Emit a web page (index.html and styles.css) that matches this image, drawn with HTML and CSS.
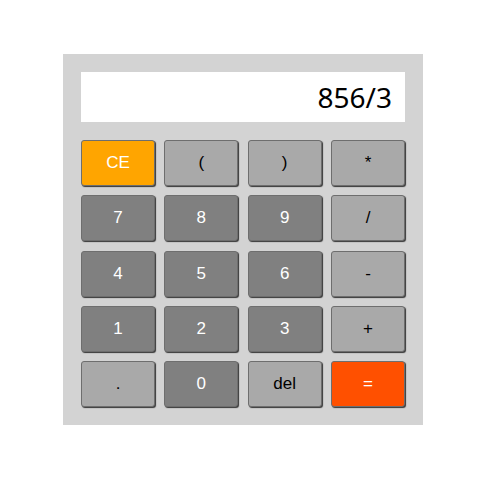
FILE: index.html
```html
<!DOCTYPE html>
<html>
<head>
<meta charset="utf-8">
<link rel="stylesheet" href="styles.css">
</head>
<body>
<div class="calc">
  <div class="display">856/3</div>
  <div class="keys">
    <button class="key ce">CE</button>
    <button class="key op">(</button>
    <button class="key op">)</button>
    <button class="key op">*</button>
    <button class="key num">7</button>
    <button class="key num">8</button>
    <button class="key num">9</button>
    <button class="key op">/</button>
    <button class="key num">4</button>
    <button class="key num">5</button>
    <button class="key num">6</button>
    <button class="key op">-</button>
    <button class="key num">1</button>
    <button class="key num">2</button>
    <button class="key num">3</button>
    <button class="key op">+</button>
    <button class="key op">.</button>
    <button class="key num">0</button>
    <button class="key op">del</button>
    <button class="key eq">=</button>
  </div>
</div>
</body>
</html>
```

FILE: styles.css
```css
html, body {
  margin: 0;
  padding: 0;
  background: #ffffff;
}
body {
  padding-top: 54px;
}
.calc {
  margin-left: 63px;
  width: 360px;
  box-sizing: border-box;
  padding: 18px;
  background: #d3d3d3;
  display: flex;
  flex-direction: column;
  gap: 18px;
}
.display {
  height: 50px;
  background: #ffffff;
  font-family: "Noto Sans", "Open Sans", sans-serif;
  font-size: 28px;
  line-height: 50px;
  text-align: right;
  padding-right: 13px;
  color: #000;
}
.keys {
  display: grid;
  grid-template-columns: repeat(4, 1fr);
  column-gap: 9.33px;
  row-gap: 9.25px;
}
.key {
  height: 46px;
  margin: 0;
  padding: 0;
  border: 1px solid #6e6e6e;
  border-radius: 3px;
  box-shadow: 1px 1px 1px rgba(0, 0, 0, 0.75);
  font-family: "Liberation Sans", Arial, sans-serif;
  font-size: 17px;
}
.num {
  background: #808080;
  color: #ffffff;
}
.op {
  background: #a9a9a9;
  color: #000000;
}
.ce {
  background: #ffa500;
  color: #ffffff;
}
.eq {
  background: #ff5000;
  color: #ffffff;
}
```
